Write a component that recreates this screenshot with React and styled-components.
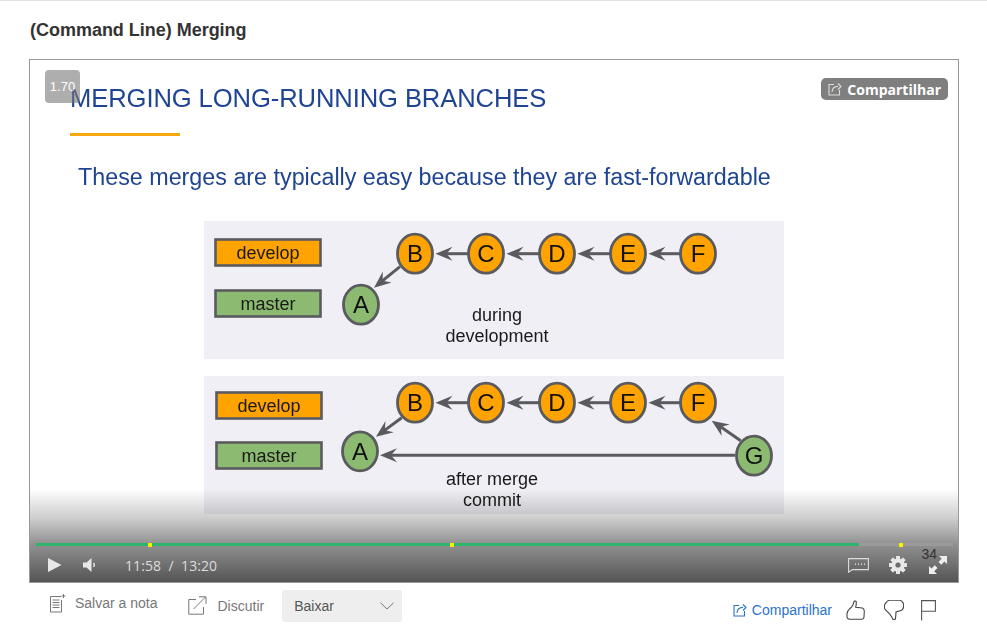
import React from "react";
import styled, { createGlobalStyle } from "styled-components";

const Global = createGlobalStyle`
  html, body { margin: 0; padding: 0; background: #fff; }
  body { font-family: "Liberation Sans", Arial, sans-serif; }
`;

const Page = styled.div`
  width: 987px;
  height: 630px;
  overflow: hidden;
  box-sizing: border-box;
  border-top: 1px solid #e2e2e2;
  padding: 0 28px 0 29px;
`;

const Title = styled.h2`
  margin: 0;
  padding: 19px 0 0 1px;
  height: 58px;
  box-sizing: border-box;
  font-size: 18px;
  line-height: 21px;
  font-weight: 700;
  color: #333;
  letter-spacing: -0.02px;
`;

const Player = styled.div`
  position: relative;
  width: 930px;
  height: 524px;
  box-sizing: border-box;
  border: 1px solid #999;
  background: #fff;
  overflow: hidden;
`;

const Slide = styled.div`
  display: flex;
  flex-direction: column;
  height: 100%;
  padding: 21px 0 0 40px;
  box-sizing: border-box;
  filter: blur(0.35px);
`;

const SlideHeading = styled.h1`
  margin: 0;
  font-weight: 400;
  font-size: 25.6px;
  line-height: 34px;
  color: #1f4493;
  letter-spacing: -0.1px;
  white-space: nowrap;
`;

const Rule = styled.div`
  width: 110px;
  height: 3px;
  margin-top: 18px;
  background: #f6a90f;
`;

const SlideText = styled.p`
  margin: 24px 0 0 8px;
  font-size: 23.3px;
  line-height: 34px;
  color: #1f4493;
  white-space: nowrap;
`;

const Panels = styled.div`
  display: flex;
  flex-direction: column;
  gap: 17px;
  margin: 27px 0 0 134px;
`;

const PanelSvg = styled.svg`
  display: block;
  flex: none;
  width: 580px;
  height: 138px;
  background: #efeff5;
  font-family: "Liberation Sans", Arial, sans-serif;
`;

const Scrim = styled.div`
  position: absolute;
  left: 0;
  right: 0;
  bottom: 0;
  height: 93px;
  background: linear-gradient(to bottom, rgba(0,0,0,0) 0%, rgba(0,0,0,0.07) 11%, rgba(0,0,0,0.2) 32%, rgba(0,0,0,0.43) 59%, rgba(0,0,0,0.67) 100%);
`;

const SpeedBadge = styled.div`
  position: absolute;
  left: 15px;
  top: 10px;
  width: 35px;
  height: 33px;
  border-radius: 4px;
  background: rgba(120, 120, 120, 0.6);
  color: #fff;
  font-size: 13px;
  line-height: 33px;
  text-align: center;
`;

const ShareBadge = styled.div`
  position: absolute;
  right: 10px;
  top: 18px;
  height: 22px;
  padding: 0 7px;
  display: flex;
  align-items: center;
  gap: 5px;
  border-radius: 5px;
  background: #7f7f7f;
  color: #fff;
  font-family: "Open Sans", sans-serif;
  font-size: 14px;
  font-weight: 700;
`;

const Track = styled.div`
  position: absolute;
  left: 6px;
  width: 917px;
  top: 483px;
  height: 3px;
  background: #9a9a9a;
`;

const Played = styled.div`
  height: 100%;
  background: #2eb36c;
`;

const Marker = styled.span`
  position: absolute;
  top: -0.5px;
  width: 4px;
  height: 4px;
  background: #f5f500;
`;

const Controls = styled.div`
  position: absolute;
  left: 0;
  right: 0;
  bottom: 0;
  height: 34px;
  display: flex;
  align-items: center;
  padding: 0 11px 0 18px;
`;

const TimeText = styled.span`
  margin-left: 28px;
  font-family: "Open Sans", sans-serif;
  font-size: 14px;
  letter-spacing: 0.07px;
  color: #ddd;
  white-space: pre;
`;

const Spacer = styled.div`
  flex: 1;
`;

const Hint = styled.span`
  position: absolute;
  right: 21px;
  top: -2px;
  font-size: 14px;
  line-height: 16px;
  color: #333;
`;

const IconGroup = styled.div`
  display: flex;
  align-items: center;
  margin-left: ${(p) => p.$gap || 0}px;
`;

const Actions = styled.div`
  display: flex;
  height: 47px;
  padding-left: 20px;
  align-items: flex-start;
`;

const ActionLink = styled.div`
  display: flex;
  align-items: center;
  gap: ${(p) => p.$gap}px;
  margin-right: ${(p) => p.$mr}px;
  padding-top: ${(p) => p.$pt}px;
  font-size: 14px;
  line-height: 16px;
  color: #777;
`;

const Dropdown = styled.div`
  width: 120px;
  height: 32px;
  margin-top: 7px;
  padding: 0 8px 0 12px;
  box-sizing: border-box;
  display: flex;
  align-items: center;
  justify-content: space-between;
  border-radius: 2px;
  background: #eee;
  font-size: 14px;
  color: #555;
`;

const RightActions = styled.div`
  margin-left: auto;
  display: flex;
  align-items: center;
  height: 47px;
  padding: 7px 23px 0 0;
  box-sizing: border-box;
`;

const BlueLink = styled.div`
  display: flex;
  align-items: center;
  gap: 5px;
  margin-right: 14px;
  font-size: 14px;
  color: #2a73cc;
`;

const ThinIcon = styled.svg`
  display: block;
  margin-right: ${(p) => p.$mr || 0}px;
`;

const ORANGE = "#ffa300";
const GREEN = "#8cba70";
const STROKE = "#5a5b5f";

function Arrow({ x1, y1, x2, y2 }) {
  const a = Math.atan2(y2 - y1, x2 - x1);
  const pt = (back, side) => {
    const x = x2 - back * Math.cos(a) - side * Math.sin(a);
    const y = y2 - back * Math.sin(a) + side * Math.cos(a);
    return `${x.toFixed(1)},${y.toFixed(1)}`;
  };
  return (
    <g>
      <line x1={x1} y1={y1} x2={x2 - 6 * Math.cos(a)} y2={y2 - 6 * Math.sin(a)} stroke={STROKE} strokeWidth="3" />
      <polygon points={[pt(0, 0), pt(17, 7), pt(11, 0), pt(17, -7)].join(" ")} fill={STROKE} />
    </g>
  );
}

function Branch({ y, fill, label, x = 10 }) {
  return (
    <g>
      <rect x={x + 1.5} y={y + 1.5} width="105" height="26" fill={fill} stroke={STROKE} strokeWidth="2.6" />
      <text x={x + 54} y={y + 21} textAnchor="middle" fontSize="18" fill="#1a1a1a">{label}</text>
    </g>
  );
}

function Node({ x, y, fill, label }) {
  return (
    <g>
      <ellipse cx={x} cy={y} rx="17.5" ry="19.5" fill={fill} stroke={STROKE} strokeWidth="2.8" />
      <text x={x} y={y + 8.5} textAnchor="middle" fontSize="24" fill="#111">{label}</text>
    </g>
  );
}

function Caption({ x, y, children }) {
  return <text x={x} y={y} textAnchor="middle" fontSize="18" fill="#1a1a1a">{children}</text>;
}

const topRow = [["C", 282], ["D", 353], ["E", 424], ["F", 494]];

function PanelDuring() {
  const y = 32.7;
  return (
    <PanelSvg viewBox="0 0 580 138">
      <Branch y={17} fill={ORANGE} label="develop" />
      <Branch y={68} fill={GREEN} label="master" />
      {[[211, 282], [282, 353], [353, 424], [424, 494]].map(([to, from]) => (
        <Arrow key={from} x1={from - 18} y1={y} x2={to + 20.5} y2={y} />
      ))}
      <Arrow x1={196} y1={45.7} x2={170} y2={66.7} />
      <Node x={157} y={83.7} fill={GREEN} label="A" />
      <Node x={211} y={y} fill={ORANGE} label="B" />
      {topRow.map(([l, x]) => <Node key={l} x={x} y={y} fill={ORANGE} label={l} />)}
      <Caption x={293} y={100}>during</Caption>
      <Caption x={293} y={121}>development</Caption>
    </PanelSvg>
  );
}

function PanelAfter() {
  const y = 26.7;
  return (
    <PanelSvg viewBox="0 0 580 138">
      <Branch x={11} y={15} fill={ORANGE} label="develop" />
      <Branch x={11} y={65} fill={GREEN} label="master" />
      {[[211, 282], [282, 353], [353, 424], [424, 494]].map(([to, from]) => (
        <Arrow key={from} x1={from - 18} y1={y} x2={to + 20.5} y2={y} />
      ))}
      <Arrow x1={197.7} y1={41.7} x2={172} y2={60.7} />
      <Arrow x1={531} y1={79.3} x2={176} y2={79.3} />
      <Arrow x1={536.7} y1={64.7} x2={507.7} y2={44.7} />
      <Node x={156} y={75.3} fill={GREEN} label="A" />
      <Node x={211} y={y} fill={ORANGE} label="B" />
      {topRow.map(([l, x]) => <Node key={l} x={x} y={y} fill={ORANGE} label={l} />)}
      <Node x={550} y={79.7} fill={GREEN} label="G" />
      <Caption x={288} y={109}>after merge</Caption>
      <Caption x={288} y={130}>commit</Caption>
    </PanelSvg>
  );
}

const ShareIcon = ({ color, size = 14 }) => (
  <svg width={size} height={size} viewBox="0 0 14 14" fill="none" stroke={color} strokeWidth="1.1">
    <path d="M6 2.500H1v10.500h10.500V8" />
    <path d="M4 10c.3-3.400 2.600-5.600 6-5.600M10 1.500l3 3-3 3" />
  </svg>
);

const PlayIcon = () => (
  <svg width="14" height="16" viewBox="0 0 14 16"><path d="M0 1l13.500 7L0 15z" fill="#e8e8e8" /></svg>
);

const VolumeIcon = () => (
  <svg width="14" height="14" viewBox="0 0 14 14" fill="#e8e8e8">
    <path d="M0 4.500h3.500L8.500 0v14L3.500 9.500H0z" />
    <path d="M10.500 5c1 1.200 1 2.800 0 4" fill="none" stroke="#e8e8e8" strokeWidth="1.300" />
  </svg>
);

const CaptionsIcon = () => (
  <svg width="21" height="15" viewBox="0 0 21 15" fill="none" stroke="#ddd" strokeWidth="1.1">
    <path d="M.6.6h19.800v11H4.500L.6 14.200z" />
    <path d="M7 6.200h1M10 6.200h1M13 6.200h1M16 6.200h1" strokeWidth="1.400" />
  </svg>
);

const GearIcon = () => (
  <svg width="18" height="18" viewBox="0 0 18 18">
    <g fill="#e8e8e8">
      <circle cx="9" cy="9" r="6.600" />
      {[0, 45, 90, 135, 180, 225, 270, 315].map((r) => (
        <rect key={r} x="7" y="0" width="4" height="4" rx="0.600" transform={`rotate(${r} 9 9)`} />
      ))}
    </g>
    <circle cx="9" cy="9" r="2.600" fill="#6c6c6c" />
  </svg>
);

const ExpandIcon = () => (
  <svg width="18" height="18" viewBox="0 0 18 18" fill="#eee">
    <path d="M10 0h8v8l-2.500-2.500-3.300 3.300-2.700-2.700 3.300-3.300z" />
    <path d="M8 18H0v-8l2.500 2.500 3.300-3.300 2.700 2.700-3.300 3.300z" />
  </svg>
);

const NoteIcon = () => (
  <svg width="18" height="20" viewBox="0 0 18 20" fill="none" stroke="#777" strokeWidth="1">
    <path d="M12 3.500H1.500v15.500h11V7" />
    <path d="M3.500 7h7M3.500 9.500h7M3.500 12h7M3.500 14.500h7" />
    <path d="M14.500 1v4M12.500 3h4" />
  </svg>
);

const ExternalIcon = () => (
  <svg width="19" height="19" viewBox="0 0 19 19" fill="none" stroke="#777" strokeWidth="1">
    <path d="M8 3.500H.8v14.700h14.700V11" />
    <path d="M5.500 13L17.500 1M11 .8h7v7" />
  </svg>
);

const Chevron = () => (
  <svg width="14" height="8" viewBox="0 0 14 8" fill="none" stroke="#777" strokeWidth="1"><path d="M.5.8L7 7l6.500-6.200" /></svg>
);

const ThumbUp = () => (
  <ThinIcon $mr={18} width="20" height="21" viewBox="0 0 20 21" fill="none" stroke="#444" strokeWidth="1.1">
    <path d="M1 13.700C1.600 11 2.500 9.800 3.700 8.700 5.300 7.500 6.500 6 7 4.700L8.300 1c1-.2 1.800.2 2 1 .2 1.800-.2 3.500-.6 5.300l6.600.7c1.400.4 2 1.800 2 3.300L18 17c-.2 1.300-1 2.300-2.300 2.300h-11C2.600 19.300 1 18.500 1 17z" />
  </ThinIcon>
);

const ThumbDown = () => (
  <ThinIcon $mr={17} width="20" height="21" viewBox="0 0 20 21" fill="none" stroke="#444" strokeWidth="1.1">
    <path d="M2 2.700C3 1.200 4 .3 5.300.3h10c2.200 0 4.400 2.500 4.400 5 0 2.400-1 4.300-2 5L12 12c-.2 2.500-.2 5-.7 7.300l-2 .4c-1-2-2.500-4.200-4-6L2 10.300C1 9.300.3 8.200.3 7 .3 5.200 1 3.800 2 2.700z" />
  </ThinIcon>
);

const FlagIcon = () => (
  <svg width="15" height="21" viewBox="0 0 15 21" fill="none" stroke="#555" strokeWidth="1.1">
    <path d="M.6 20.500V.6h13.800v10.600H.6" />
  </svg>
);

export default function App() {
  return (
    <Page>
      <Global />
      <Title>(Command Line) Merging</Title>
      <Player>
        <Slide>
          <SlideHeading>MERGING LONG-RUNNING BRANCHES</SlideHeading>
          <Rule />
          <SlideText>These merges are typically easy because they are fast-forwardable</SlideText>
          <Panels>
            <PanelDuring />
            <PanelAfter />
          </Panels>
        </Slide>
        <Scrim />
        <SpeedBadge>1.70</SpeedBadge>
        <ShareBadge><ShareIcon color="#ddd" />Compartilhar</ShareBadge>
        <Track>
          <Played style={{ width: `${(823 / 917) * 100}%` }} />
          <Marker style={{ left: 112 }} />
          <Marker style={{ left: 414 }} />
          <Marker style={{ left: 863 }} />
        </Track>
        <Controls>
          <IconGroup><PlayIcon /></IconGroup>
          <IconGroup $gap={21}><VolumeIcon /></IconGroup>
          <TimeText>11:58  /  13:20</TimeText>
          <Spacer />
          <Hint>34</Hint>
          <IconGroup><CaptionsIcon /></IconGroup>
          <IconGroup $gap={20}><GearIcon /></IconGroup>
          <IconGroup $gap={22}><ExpandIcon /></IconGroup>
        </Controls>
      </Player>
      <Actions>
        <ActionLink $gap={8} $mr={30} $pt={10}><NoteIcon />Salvar a nota</ActionLink>
        <ActionLink $gap={11} $mr={18} $pt={13}><ExternalIcon />Discutir</ActionLink>
        <Dropdown>Baixar<Chevron /></Dropdown>
        <RightActions>
          <BlueLink><ShareIcon color="#2a73cc" />Compartilhar</BlueLink>
          <ThumbUp />
          <ThumbDown />
          <FlagIcon />
        </RightActions>
      </Actions>
    </Page>
  );
}
